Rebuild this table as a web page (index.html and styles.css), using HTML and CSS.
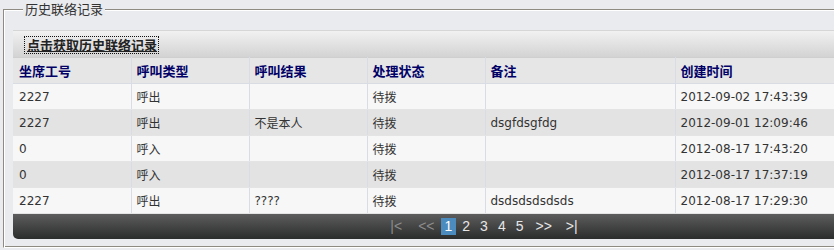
FILE: index.html
```html
<!DOCTYPE html>
<html>
<head>
<meta charset="utf-8">
<link rel="stylesheet" href="styles.css">
</head>
<body>
<fieldset class="history">
  <legend class="history-title">历史联络记录</legend>
  <div class="panel">
    <div class="toolbar">
      <button class="fetch-btn">点击获取历史联络记录</button>
    </div>
    <table class="grid">
      <colgroup>
        <col class="c1"><col class="c2"><col class="c3"><col class="c4"><col class="c5"><col class="c6">
      </colgroup>
      <thead>
        <tr><th>坐席工号</th><th>呼叫类型</th><th>呼叫结果</th><th>处理状态</th><th>备注</th><th>创建时间</th></tr>
      </thead>
      <tbody>
        <tr><td>2227</td><td>呼出</td><td></td><td>待拨</td><td></td><td>2012-09-02 17:43:39</td></tr>
        <tr class="alt"><td>2227</td><td>呼出</td><td>不是本人</td><td>待拨</td><td>dsgfdsgfdg</td><td>2012-09-01 12:09:46</td></tr>
        <tr><td>0</td><td>呼入</td><td></td><td>待拨</td><td></td><td>2012-08-17 17:43:20</td></tr>
        <tr class="alt"><td>0</td><td>呼入</td><td></td><td>待拨</td><td></td><td>2012-08-17 17:37:19</td></tr>
        <tr><td>2227</td><td>呼出</td><td>????</td><td>待拨</td><td>dsdsdsdsdsds</td><td>2012-08-17 17:29:30</td></tr>
      </tbody>
    </table>
    <div class="pager">
      <span class="pg first disabled">|&lt;</span>
      <span class="pg prev disabled">&lt;&lt;</span>
      <span class="pg current">1</span>
      <span class="pg">2</span>
      <span class="pg">3</span>
      <span class="pg">4</span>
      <span class="pg">5</span>
      <span class="pg next">&gt;&gt;</span>
      <span class="pg last">&gt;|</span>
    </div>
  </div>
</fieldset>
</body>
</html>
```
FILE: styles.css
```css
html, body {
  margin: 0;
  padding: 0;
  overflow: hidden;
  background: #eaebee;
}
body {
  font-family: "DejaVu Sans", "Noto Sans CJK SC", sans-serif;
  font-size: 12px;
  color: #333;
}
.history {
  margin: 0 0 0 3px;
  padding: 12px 0 8px 9px;
  width: 952px;
  border: 1px solid;
  border-color: #8e8c82 #ffffff #ffffff #8e8c82;
  box-shadow: inset 1px 1px 0 #ffffff, inset -1px -1px 0 #8e8c82;
}
.history-title {
  font-family: "Noto Sans CJK SC", sans-serif;
  font-size: 13px;
  line-height: 18px;
  color: #333;
  margin-left: 10px;
  padding: 0 2px 0 2px;
  background: #eaebee;
}
.panel {
  width: 942px;
}
.toolbar {
  height: 26px;
  border-top: 1px solid #d6d6d6;
  background: linear-gradient(#f1f1f1, #d3d3d3);
  display: flex;
  align-items: center;
  padding-left: 12px;
}
.fetch-btn {
  font-family: "Noto Sans CJK SC", sans-serif;
  font-size: 13px;
  font-weight: bold;
  line-height: 14px;
  color: #222;
  text-decoration: underline;
  background: transparent;
  border: 0;
  outline: 1px dotted #111;
  padding: 1px 1px 1px 2px;
  margin: 1px 0 0 0;
}
.grid {
  border-collapse: collapse;
  table-layout: fixed;
  width: 942px;
}
.c1, .c2, .c3, .c4 { width: 118px; }
.c5 { width: 190px; }
.grid th, .grid td {
  text-align: left;
  padding: 0 0 0 5px;
  border-right: 1px solid #d9dde3;
  white-space: nowrap;
}
.grid th:first-child, .grid td:first-child { padding-left: 6px; }
.grid th {
  height: 25px;
  background: #e6e6e6;
  border-bottom: 1px solid #d9dde3;
  font-family: "Noto Sans CJK SC", sans-serif;
  font-size: 13px;
  font-weight: bold;
  color: #000066;
  border-top: 1px solid #cfcfcf;
}
.grid td {
  height: 25px;
  background: #f7f7f7;
  border-bottom: 1px solid #e4e4e4;
}
.grid tr.alt td {
  background: #e3e3e3;
}
.pager {
  height: 25px;
  background: linear-gradient(#5d5d5d, #2b2c2c);
  border-bottom-left-radius: 5px;
  display: flex;
  align-items: center;
  justify-content: center;
  gap: 2px;
  font-family: "Liberation Sans", sans-serif;
  font-size: 14px;
  color: #e6e6e6;
}
.pg {
  padding: 0 4px;
  line-height: 17px;
}
.pg.disabled { color: #8c8c8c; }
.pg.first { margin-right: 6px; }
.pg.current {
  background: #4b8bbe;
  color: #fff;
}
.pg.next { margin-left: 2px; margin-right: 4px; }
```
